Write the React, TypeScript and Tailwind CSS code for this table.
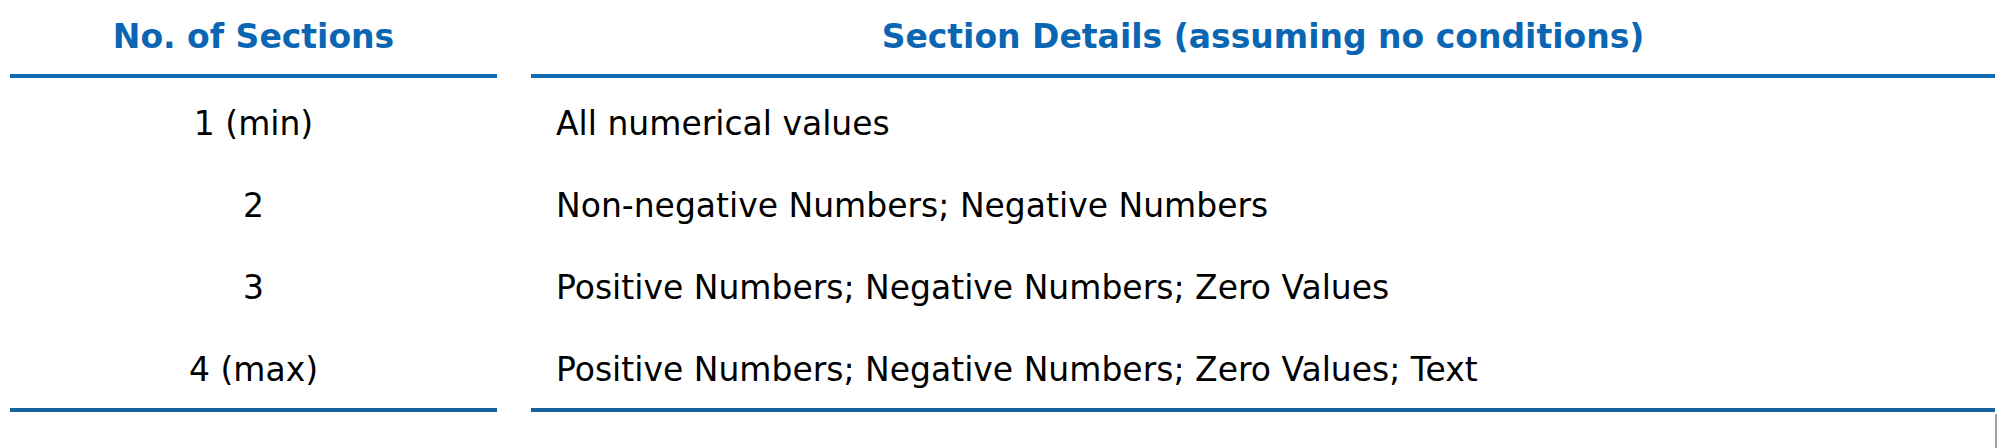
import React from "react";

const rows = [
  { n: "1 (min)", d: "All numerical values" },
  { n: "2", d: "Non-negative Numbers; Negative Numbers" },
  { n: "3", d: "Positive Numbers; Negative Numbers; Zero Values" },
  { n: "4 (max)", d: "Positive Numbers; Negative Numbers; Zero Values; Text" },
];

export default function App() {
  return (
    <div
      className="relative w-[2001px] h-[448px] bg-white overflow-hidden"
      style={{ fontFamily: '"DejaVu Sans", sans-serif' }}
    >
      <div className="flex pl-[10px] gap-[34px]">
        {/* Left column */}
        <div className="w-[487px] flex flex-col">
          <div className="h-[74px] flex items-center justify-center pb-[1px] text-[33px] font-bold text-[#0a66b2]">
            No. of Sections
          </div>
          <div className="h-[4px] bg-[#0f6bb3]" />
          <div className="pt-[2px] flex flex-col">
            {rows.map((r) => (
              <div key={r.n} className="h-[82px] flex items-center justify-center pt-[6px] text-[33px] text-black">
                {r.n}
              </div>
            ))}
          </div>
          <div className="h-[4px] bg-[#17639d]" />
        </div>
        {/* Right column */}
        <div className="w-[1464px] flex flex-col">
          <div className="h-[74px] flex items-center justify-center pb-[1px] text-[33px] font-bold text-[#0a66b2]">
            Section Details (assuming no conditions)
          </div>
          <div className="h-[4px] bg-[#0f6bb3]" />
          <div className="pt-[2px] flex flex-col">
            {rows.map((r) => (
              <div key={r.n} className="h-[82px] flex items-center pl-[25px] pt-[6px] text-[33px] text-black">
                {r.d}
              </div>
            ))}
          </div>
          <div className="h-[4px] bg-[#17639d]" />
        </div>
      </div>
      <div className="absolute left-[1995px] top-[414px] w-[2px] h-[34px] bg-[#a0a0a0]" />
    </div>
  );
}
